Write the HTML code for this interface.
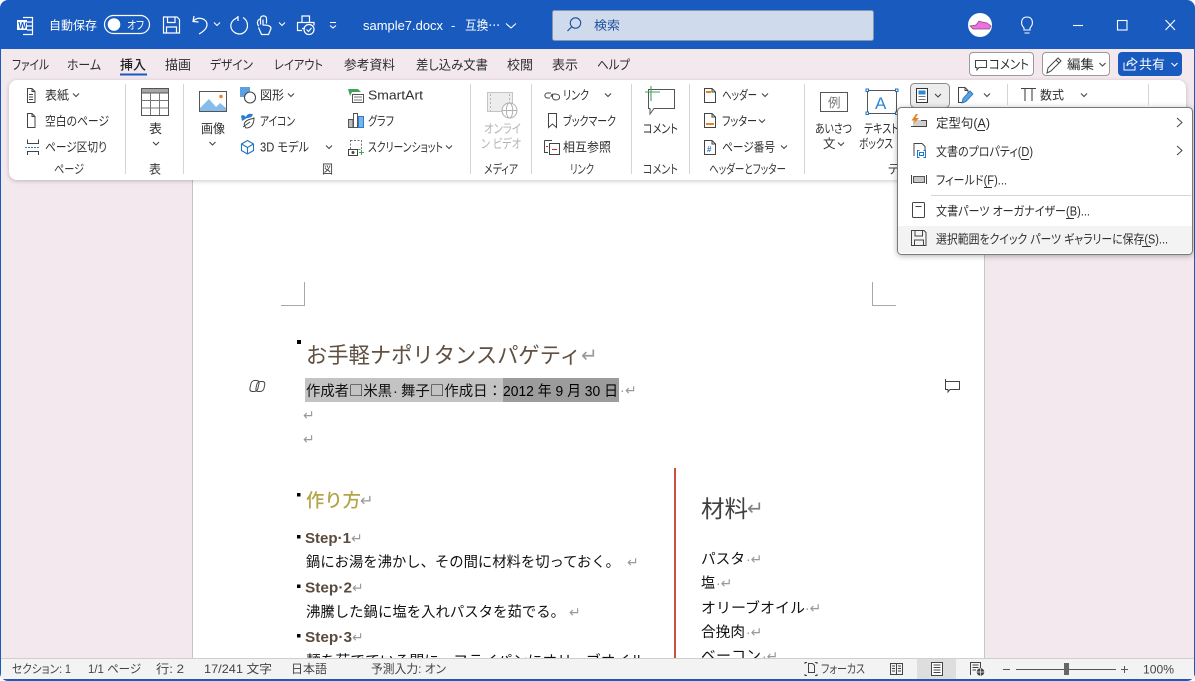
<!DOCTYPE html>
<html lang="ja"><head><meta charset="utf-8"><title>sample7.docx</title>
<style>
html,body{margin:0;padding:0;background:#fff;overflow:hidden;width:1195px;height:681px}
svg{display:block}
text{font-family:"Liberation Sans","Noto Sans CJK JP","DejaVu Sans",sans-serif;font-size:12px;fill:#333;font-feature-settings:"palt";white-space:pre}
.w{fill:#fff}
.tb{font-size:13px;fill:#2e2e2e}
.m{font-size:12.5px;fill:#2e2e2e}
.g{font-size:12.5px;fill:#3a3a3a}
.s{font-size:12px;fill:#444}
.d{font-size:14.5px;fill:#111;font-feature-settings:normal}
.j{font-family:"Noto Sans CJK JP",sans-serif}
.st{font-size:15px;font-weight:700;fill:#5a4b3e}
.r{fill:#999;font-size:14px;font-feature-settings:normal}
.dim{fill:#b3b3b3}
.ic{fill:none;stroke:#444;stroke-width:1}
.iw{fill:none;stroke:#fff;stroke-width:1.2}
.ch{fill:none;stroke:#444;stroke-width:1.1}
.cw{fill:none;stroke:#fff;stroke-width:1.1}
</style></head><body>
<svg width="1195" height="681" viewBox="0 0 1195 681" xmlns="http://www.w3.org/2000/svg">
<defs>
<path id="c" d="M-3 -1.5L0 1.5L3 -1.5" class="ch"/>
<path id="cw" d="M-3 -1.5L0 1.5L3 -1.5" class="cw"/>
</defs>

<!-- window -->
<rect x="0" y="0" width="1195" height="681" rx="8" fill="#185abd"/>
<rect x="1" y="49" width="1193" height="630" fill="#f3e8ee"/>

<!-- title bar -->
<g>
<g transform="translate(0,-2)">
<path d="M23 19.5H32.5V36.5H23" class="iw" stroke-width="1"/><path d="M27 24H32M27 28H32M27 32H32" class="iw"/>
<rect x="17" y="22" width="10" height="10" fill="#fff"/>
<text x="18.2" y="30.5" style="font-size:9px;font-weight:700;fill:#185abd">W</text>
</g>
<text class="w" x="49" y="29.5" textLength="48" lengthAdjust="spacingAndGlyphs">自動保存</text>
<rect x="104.500" y="15.500" width="45" height="18" rx="9" fill="none" stroke="#fff" stroke-width="1.200"/>
<circle cx="114" cy="24.500" r="6.300" fill="#fff"/>
<text class="w" x="127" y="29" style="font-size:11.500px" textLength="17" lengthAdjust="spacingAndGlyphs">オフ</text>
<g transform="translate(0,-1.500)">
<path d="M163.500 18.500H177L179.500 21V34.500H163.500ZM167.500 18.500V24H175V18.500M166.500 34.500V28.500H176.500V34.500" class="iw"/>
<path d="M194 17.500L193 23L198.500 23.500M193.500 22.500C198 17.500 207 20 207 26C207 30 203.500 33 199 35.500" class="iw"/>
<use href="#cw" x="217" y="25.500"/>
<path d="M238 18.500L233.500 21.500C231 24 230.500 27 231 29C232 33 236 35.500 239.500 35.500C244 35.500 247.500 31.500 247.500 27C247.500 23.500 245.500 20.500 243 19M238 17.500V22.500" class="iw"/>
<path d="M262 26V20C262 16.500 268 16.500 268 20V25M261.500 20.500C258 22 258.500 26 260.500 27.500M264.500 21V27M260 29L263 36H270L272.500 30C272.500 27.500 270 26.500 264.500 26.500" class="iw" transform="translate(-1.500,0)"/>
<use href="#cw" x="282" y="25.500"/>
<path d="M302 24V17.500H309.500V24M302 32H297.500V24H314V27M302 30H305" class="iw"/>
<circle cx="309" cy="31" r="5" class="iw"/><path d="M306.500 31L308.500 33L311.500 29.500" class="iw"/>
<path d="M330 24H336M330 27L333 29.500L336 27" class="cw"/>
</g>
<text class="w" x="363" y="30" style="font-size:13px" textLength="80" lengthAdjust="spacingAndGlyphs">sample7.docx</text>
<text class="w" x="451" y="30" style="font-size:13px">-</text>
<text class="w" x="465" y="30" style="font-size:13px" textLength="35" lengthAdjust="spacingAndGlyphs">互換⋯</text>
<path d="M506 23.500L511 28L516 23.500" class="cw"/>
<rect x="552.500" y="10.500" width="321" height="30" rx="2" fill="#cfdaec" stroke="#8496b4"/>
<circle cx="575.500" cy="23" r="5.200" fill="none" stroke="#1d4f9c" stroke-width="1.100"/><path d="M571.500 27L567.500 31" stroke="#1d4f9c" stroke-width="1.200"/>
<text x="594" y="29.500" style="fill:#1d4f9c" textLength="26" lengthAdjust="spacingAndGlyphs">検索</text>
<circle cx="980" cy="25" r="12" fill="#fff"/>
<path d="M970 26L976 25L979 21L982 22L987 23L991 26L989.500 29H973Z" fill="#ef6fe0" stroke="#7c4b78" stroke-width=".7"/>
<path d="M1024 30V28C1020 24 1021 17 1027 17C1033 17 1034 24 1030 28V30ZM1024.500 33H1029.500" fill="none" stroke="#fff" stroke-width="1.100"/>
<path d="M1073 25.500H1083" stroke="#fff" stroke-width="1.100"/>
<rect x="1117.500" y="20.500" width="9.500" height="9.500" fill="none" stroke="#fff" stroke-width="1.100"/>
<path d="M1165.500 20L1175 30M1175 20L1165.500 30" stroke="#fff" stroke-width="1.100"/>
</g>

<!-- tabs -->
<g>
<text class="tb" x="12" y="69.500" textLength="37" lengthAdjust="spacingAndGlyphs">ファイル</text>
<text class="tb" x="67" y="69.500" textLength="34" lengthAdjust="spacingAndGlyphs">ホーム</text>
<text class="tb" x="120" y="69.500" textLength="26" lengthAdjust="spacingAndGlyphs" style="font-weight:500;fill:#222">挿入</text>
<rect x="120" y="73.500" width="27" height="2" fill="#185abd"/>
<text class="tb" x="165" y="69.500" textLength="26" lengthAdjust="spacingAndGlyphs">描画</text>
<text class="tb" x="210" y="69.500" textLength="43" lengthAdjust="spacingAndGlyphs">デザイン</text>
<text class="tb" x="274" y="69.500" textLength="49" lengthAdjust="spacingAndGlyphs">レイアウト</text>
<text class="tb" x="344" y="69.500" textLength="51" lengthAdjust="spacingAndGlyphs">参考資料</text>
<text class="tb" x="416" y="69.500" textLength="72" lengthAdjust="spacingAndGlyphs">差し込み文書</text>
<text class="tb" x="507" y="69.500" textLength="26" lengthAdjust="spacingAndGlyphs">校閲</text>
<text class="tb" x="552" y="69.500" textLength="26" lengthAdjust="spacingAndGlyphs">表示</text>
<text class="tb" x="597" y="69.500" textLength="33" lengthAdjust="spacingAndGlyphs">ヘルプ</text>
<rect x="969.500" y="52.500" width="64" height="23" rx="3.500" fill="#fff" stroke="#9a9a9a"/>
<path d="M975.500 60.500H986.500V67.500H979L977 70V67.500H975.500Z" class="ic"/>
<text x="989" y="69" textLength="40" lengthAdjust="spacingAndGlyphs" style="fill:#2e2e2e;font-size:13px">コメント</text>
<rect x="1042.500" y="52.500" width="67" height="23" rx="3.500" fill="#fff" stroke="#9a9a9a"/>
<path d="M1047 73L1048 68L1058 58L1061 61L1051 71ZM1056 60L1059 63" class="ic"/>
<text x="1067" y="69" textLength="27" lengthAdjust="spacingAndGlyphs" style="fill:#2e2e2e;font-size:13px">編集</text>
<use href="#c" x="1102.500" y="64.500"/>
<rect x="1118" y="52" width="64" height="24" rx="4" fill="#185abd"/>
<path d="M1124 62.500V70H1135V66M1127 66C1127 62 1129 60.500 1132 60.500V58L1137 62L1132 65.500V63C1130 63 1128 64 1127 66Z" fill="none" stroke="#fff" stroke-width="1"/>
<text class="w" x="1139" y="69" textLength="26" lengthAdjust="spacingAndGlyphs" style="font-size:13px">共有</text>
<use href="#cw" x="1174.500" y="64.500"/>
</g>

<!-- document page -->
<rect x="193" y="180" width="791.500" height="480" fill="#fff"/>
<path d="M192.500 180V660M984.500 180V660" stroke="#c6c6c6"/>
<path d="M304.500 282V305.500H281M872.500 282V305.500H896" fill="none" stroke="#a8a8a8"/>

<rect x="297" y="340" width="4" height="4" fill="#000"/>
<text x="306" y="363" style="font-size:22px;fill:#5f5042;font-feature-settings:normal" textLength="275" lengthAdjust="spacingAndGlyphs">お手軽ナポリタンスパゲティ</text>
<text class="r" x="581" y="362" style="font-size:20px">↵</text>
<rect x="305" y="378" width="198" height="24" fill="#c3c3c3"/>
<rect x="503" y="378" width="116" height="24" fill="#9c9c9c"/>
<text class="d" x="306" y="396" textLength="86" lengthAdjust="spacingAndGlyphs">作成者<tspan class="j">□</tspan>米黒</text>
<text class="d" x="393" y="396">·</text>
<text class="d" x="401" y="396" textLength="101" lengthAdjust="spacingAndGlyphs">舞子<tspan class="j">□</tspan>作成日：</text>
<text class="d" x="503" y="396" textLength="115" lengthAdjust="spacingAndGlyphs" style="fill:#000">2012 年 9 月 30 日</text>
<text class="r" x="620" y="395">·</text><text class="r" x="625" y="395">↵</text>
<text class="r" x="303" y="420">↵</text>
<text class="r" x="303" y="444">↵</text>
<g fill="none" stroke="#444" stroke-width="1">
<rect x="249.500" y="380.500" width="8" height="11" rx="3" transform="skewX(-12) translate(83 0)"/>
<rect x="255.500" y="381.500" width="8" height="10" rx="3" transform="skewX(-12) translate(83 0)"/>
</g>
<path d="M945.500 381.500H959.500V389.500H950L948 392V389.500H945.500Z M945.500 379V384" class="ic"/>

<rect x="297" y="493" width="3.500" height="3.500" fill="#000"/>
<text x="306" y="507" style="font-size:18.500px;fill:#b3a547;font-weight:500;font-feature-settings:normal" textLength="55" lengthAdjust="spacingAndGlyphs">作り方</text>
<text class="r" x="360" y="506" style="font-size:16px">↵</text>
<rect x="297" y="535" width="3.500" height="3.500" fill="#000"/>
<text class="st" x="305" y="543" textLength="46" lengthAdjust="spacingAndGlyphs">Step·1</text>
<text class="r" x="351" y="543">↵</text>
<text class="d" x="306" y="567" textLength="314" lengthAdjust="spacingAndGlyphs">鍋にお湯を沸かし、その間に材料を切っておく。</text>
<text class="r" x="627" y="567">↵</text>
<rect x="297" y="584.500" width="3.500" height="3.500" fill="#000"/>
<text class="st" x="305" y="592.500" textLength="47" lengthAdjust="spacingAndGlyphs">Step·2</text>
<text class="r" x="352" y="592.500">↵</text>
<text class="d" x="306" y="617" textLength="259" lengthAdjust="spacingAndGlyphs">沸騰した鍋に塩を入れパスタを茹でる。</text>
<text class="r" x="569" y="617">↵</text>
<rect x="297" y="634" width="3.500" height="3.500" fill="#000"/>
<text class="st" x="305" y="642" textLength="47" lengthAdjust="spacingAndGlyphs">Step·3</text>
<text class="r" x="352" y="642">↵</text>
<text class="d" x="306" y="666" textLength="339" lengthAdjust="spacingAndGlyphs">麺を茹でている間に、フライパンにオリーブオイル</text>

<rect x="674" y="468" width="2" height="192" fill="#c9523f"/>
<text x="701" y="517" style="font-size:23.500px;fill:#404040" textLength="47" lengthAdjust="spacingAndGlyphs">材料</text>
<text class="r" x="747" y="515" style="font-size:20px;fill:#808080">↵</text>
<text class="d" x="701" y="564" textLength="44" lengthAdjust="spacingAndGlyphs">パスタ</text><text class="r" x="746" y="564">·↵</text>
<text class="d" x="701" y="588" textLength="14" lengthAdjust="spacingAndGlyphs">塩</text><text class="r" x="716" y="588">·↵</text>
<text class="d" x="701" y="613" textLength="104" lengthAdjust="spacingAndGlyphs">オリーブオイル</text><text class="r" x="805" y="613">·↵</text>
<text class="d" x="701" y="637" textLength="44" lengthAdjust="spacingAndGlyphs">合挽肉</text><text class="r" x="746" y="637">·↵</text>
<text class="d" x="701" y="661" textLength="60" lengthAdjust="spacingAndGlyphs">ベーコン</text><text class="r" x="762" y="661">·↵</text>

<!-- ribbon -->
<rect x="9" y="80" width="1177" height="100" rx="8" fill="#fff" style="filter:drop-shadow(0 1px 2px rgba(0,0,0,.22))"/>
<path d="M125.500 84V174M183.500 84V174M470.500 84V174M531.500 84V174M631.500 84V174M689.500 84V174M804.500 84V174M1007.500 84V105M1148.500 84V105" stroke="#d4d4d4"/>

<!-- page group -->
<g>
<path d="M27.500 88.500H32L35 91.500V102.500H27.500ZM32 88.500V91.500H35M29 94.500H33M29 97H33M29 99.500H33" class="ic"/>
<text class="m" x="45" y="99.500" textLength="24" lengthAdjust="spacingAndGlyphs">表紙</text><use href="#c" x="76" y="95"/>
<path d="M27.500 113.500H32L35 116.500V127.500H27.500ZM32 113.500V116.500H35" class="ic"/>
<text class="m" x="45" y="125.500" textLength="64" lengthAdjust="spacingAndGlyphs">空白のページ</text>
<path d="M27.500 139.500V143.500H38.500V139.500M27.500 155V151.500H38.500V155" class="ic"/>
<path d="M25 147.500H40" stroke="#2b7cd3" stroke-dasharray="2 1"/>
<text class="m" x="45" y="151.500" textLength="62" lengthAdjust="spacingAndGlyphs">ページ区切り</text>
<text class="g" x="54" y="173.500" textLength="30" lengthAdjust="spacingAndGlyphs">ページ</text>
</g>
<!-- table -->
<g>
<rect x="141.500" y="88.500" width="27" height="27" fill="#fff" stroke="#555"/>
<rect x="141.500" y="88.500" width="27" height="4.500" fill="#a6a6a6" stroke="#555"/>
<path d="M150.500 93V115M159.500 93V115M141.500 100.500H168.500M141.500 108H168.500" stroke="#777" fill="none"/>
<text class="m" x="149" y="133" textLength="13" lengthAdjust="spacingAndGlyphs">表</text>
<use href="#c" x="156" y="143.500"/>
<text class="g" x="149" y="173.500" textLength="12" lengthAdjust="spacingAndGlyphs">表</text>
</g>
<!-- illustrations -->
<g>
<rect x="199.500" y="91.500" width="27" height="20" fill="#fff" stroke="#555"/>
<path d="M200 108L209 99L216 107L220 103L226 108V111H200Z" fill="#86bce9"/>
<circle cx="221" cy="96.500" r="1.700" fill="#e8821e"/>
<text class="m" x="201" y="133" textLength="24" lengthAdjust="spacingAndGlyphs">画像</text>
<use href="#c" x="212.500" y="143.500"/>
<rect x="240" y="87" width="10" height="10" fill="#5ba0e0"/>
<circle cx="250" cy="97.500" r="5.500" fill="#fff" stroke="#444" stroke-width="1.100"/>
<text class="m" x="260" y="99.500" textLength="24" lengthAdjust="spacingAndGlyphs">図形</text><use href="#c" x="291" y="95"/>
<path d="M241 116C243 114 245 116 246 117C247 114 250 113 253 114.500C252 117 250 118 247 118L242 121Z" fill="#2b7cd3"/>
<path d="M246 128C243 125 244 122 248 120C250 119 252 119 254 118C254 123 252 128 246 128Z M243 127L250 122" class="ic"/>
<text class="m" x="260" y="125.500" textLength="35" lengthAdjust="spacingAndGlyphs">アイコン</text>
<path d="M247.500 140.500L253.500 144V150.500L247.500 154L241.500 150.500V144ZM241.500 144L247.500 147.500L253.500 144M247.500 147.500V154" fill="none" stroke="#1e75c8" stroke-width="1.100"/>
<text class="m" x="260" y="151.500" textLength="49" lengthAdjust="spacingAndGlyphs">3D モデル</text><use href="#c" x="329" y="147"/>
<text class="g" x="322" y="173.500" textLength="11" lengthAdjust="spacingAndGlyphs">図</text>
<path d="M348 89H358L361 92H352L350 96Z" fill="#3fa35b"/>
<rect x="352.500" y="94.500" width="11" height="8" fill="#fff" stroke="#555"/><path d="M354 97H362M354 100H362" stroke="#777"/>
<text class="m" x="368" y="99.500" style="font-size:13px" textLength="55" lengthAdjust="spacingAndGlyphs">SmartArt</text>
<rect x="348.500" y="119.500" width="4.500" height="8" fill="#bdbdbd" stroke="#555"/>
<rect x="353.500" y="113.500" width="4" height="14" fill="#fff" stroke="#555"/>
<rect x="358.500" y="116.500" width="5" height="11" fill="#7ab3e6" stroke="#2b7cd3"/>
<text class="m" x="368" y="125.500" textLength="26" lengthAdjust="spacingAndGlyphs">グラフ</text>
<rect x="350.500" y="140.500" width="11" height="9" fill="none" stroke="#777" stroke-dasharray="2 1.500"/>
<rect x="348.500" y="149.500" width="9" height="6" fill="#fff" stroke="#444"/><circle cx="353" cy="152.500" r="1.500" fill="#444"/>
<path d="M361.500 150V155M359 152.500H364" stroke="#3fa35b"/>
<text class="m" x="368" y="151.500" textLength="75" lengthAdjust="spacingAndGlyphs">スクリーンショット</text><use href="#c" x="449" y="147"/>
</g>
<!-- media -->
<g>
<rect x="487.500" y="92.500" width="25" height="19" fill="#ededed" stroke="#c4c4c4"/>
<path d="M490.500 94V111M509.500 94V111" stroke="#b5b5b5" stroke-dasharray="2 2"/>
<circle cx="509.500" cy="110.500" r="7.500" fill="#fff" stroke="#b0b0b0"/>
<ellipse cx="509.500" cy="110.500" rx="3.200" ry="7.500" fill="none" stroke="#b0b0b0"/><path d="M502 110.500H517" stroke="#b0b0b0"/>
<text class="m dim" x="484" y="133" textLength="37" lengthAdjust="spacingAndGlyphs">オンライ</text>
<text class="m dim" x="481" y="148" textLength="40" lengthAdjust="spacingAndGlyphs">ン ビデオ</text>
<text class="g" x="484" y="173.500" textLength="34" lengthAdjust="spacingAndGlyphs">メディア</text>
</g>
<!-- links -->
<g>
<path d="M551 93H547.500C544 93 544 98 547.500 98H550M551 97C551 94 553 94 555 94C561 94 561 100 556 100C552 100 552 96 553 95" class="ic"/>
<text class="m" x="563" y="99.500" textLength="26" lengthAdjust="spacingAndGlyphs">リンク</text><use href="#c" x="608" y="95"/>
<path d="M548.500 113.500H556.500V127.500L552.500 124L548.500 127.500Z" class="ic"/>
<text class="m" x="563" y="125.500" textLength="53" lengthAdjust="spacingAndGlyphs">ブックマーク</text>
<path d="M544.500 140.500H552M544.500 140.500V152.500H548" class="ic"/>
<rect x="549.500" y="143.500" width="10" height="11" fill="#fff" stroke="#444"/>
<path d="M552 149.500H557" stroke="#e02020"/><path d="M546 146.500H548" stroke="#e02020"/>
<text class="m" x="563" y="151.500" textLength="48" lengthAdjust="spacingAndGlyphs">相互参照</text>
<text class="g" x="570" y="173.500" textLength="24" lengthAdjust="spacingAndGlyphs">リンク</text>
</g>
<!-- comment -->
<g>
<path d="M648.500 89.500H674.500V108.500H654L650 114V108.500H648.500Z" fill="#fff" stroke="#555"/>
<path d="M651 86V101M645 92H660" stroke="#3fa35b" stroke-width="1.100"/>
<text class="m" x="643" y="133" textLength="35" lengthAdjust="spacingAndGlyphs">コメント</text>
<text class="g" x="643" y="173.500" textLength="35" lengthAdjust="spacingAndGlyphs">コメント</text>
</g>
<!-- header/footer -->
<g>
<path d="M704.500 88.500H712L715.500 92V102.500H704.500ZM712 88.500V92H715.500" class="ic"/>
<rect x="706" y="91" width="5" height="2" fill="#e8821e"/>
<text class="m" x="722" y="99.500" textLength="35" lengthAdjust="spacingAndGlyphs">ヘッダー</text><use href="#c" x="765" y="95"/>
<path d="M704.500 113.500H712L715.500 117V127.500H704.500ZM712 113.500V117H715.500" class="ic"/>
<rect x="706" y="123" width="8" height="2" fill="#e8821e"/>
<text class="m" x="722" y="125.500" textLength="35" lengthAdjust="spacingAndGlyphs">フッター</text><use href="#c" x="762" y="121"/>
<path d="M704.500 140.500H712L715.500 144V154.500H704.500ZM712 140.500V144H715.500" class="ic"/>
<text x="707" y="152" style="font-size:8px;font-weight:700;fill:#1e75c8">#</text>
<text class="m" x="722" y="151.500" textLength="53" lengthAdjust="spacingAndGlyphs">ページ番号</text><use href="#c" x="784" y="147"/>
<text class="g" x="709" y="173.500" textLength="77" lengthAdjust="spacingAndGlyphs">ヘッダーとフッター</text>
</g>
<!-- text group -->
<g>
<rect x="820.500" y="92.500" width="27" height="19" fill="#fff" stroke="#555"/>
<text x="828" y="107" style="font-size:12.500px;fill:#777">例</text>
<text class="m" x="815" y="133" textLength="37" lengthAdjust="spacingAndGlyphs">あいさつ</text>
<text class="m" x="823" y="148" textLength="12.500" lengthAdjust="spacingAndGlyphs">文</text><use href="#c" x="841" y="144"/>
<rect x="867.500" y="90.500" width="29" height="23" fill="#fff" stroke="#555"/>
<g fill="#fff" stroke="#1e75c8"><rect x="866" y="89" width="2.500" height="2.500"/><rect x="895.500" y="89" width="2.500" height="2.500"/><rect x="866" y="112" width="2.500" height="2.500"/><rect x="895.500" y="112" width="2.500" height="2.500"/></g>
<text x="875" y="109" style="font-size:17px;fill:#2b88d8">A</text>
<text class="m" x="864" y="133" textLength="35" lengthAdjust="spacingAndGlyphs">テキスト</text>
<text class="m" x="859" y="148" textLength="34" lengthAdjust="spacingAndGlyphs">ボックス</text>
<text class="g" x="888" y="173.500">テ</text>
<rect x="910.500" y="83.500" width="39" height="24" rx="4" fill="#ededed" stroke="#8a8a8a"/>
<rect x="916.500" y="88.500" width="11" height="14" fill="#fff" stroke="#333"/>
<rect x="918.500" y="90.500" width="7" height="4" fill="#2b88d8"/><path d="M918.500 96.500H925.500M918.500 99.500H925.500" stroke="#777"/>
<use href="#c" x="938" y="95.500"/>
<path d="M964 102.500H958.500V87.500H965L968 90.500V93M965 87.500V90.500H968" class="ic"/>
<path d="M962 103L963 98.500L970 91L973 94L966 101.500Z" fill="#5ba0e0" stroke="#1e75c8" stroke-width=".8"/>
<use href="#c" x="987" y="95"/>
<path d="M1021 88.500H1036M1025 88.500V101M1032 88.500V101" fill="none" stroke="#444" stroke-width="1.100"/>
<text class="m" x="1040" y="99.500" textLength="24" lengthAdjust="spacingAndGlyphs">数式</text><use href="#c" x="1084" y="95"/>
</g>

<!-- dropdown menu -->
<g>
<rect x="897.500" y="107.500" width="295" height="147" rx="4" fill="#fff" stroke="#7a7a7a" style="filter:drop-shadow(0 1px 3px rgba(0,0,0,.3))"/>
<path d="M898 226H1192V249A4 4 0 0 1 1188 253H902A4 4 0 0 1 898 249Z" fill="#f3f3f3"/>
<rect x="913" y="120" width="14" height="6" fill="#cfcfcf"/>
<path d="M911 126.500H926.500V120.500H921" class="ic"/>
<path d="M916 114L911.500 120.500H915L913.500 124L919 118H915.500L918 114Z" fill="#e8821e"/>
<text class="m" x="936" y="127.500" textLength="54" lengthAdjust="spacingAndGlyphs">定型句(A)</text>
<path d="M977 130.500H985" stroke="#333"/>
<path d="M1177 118L1182 122.500L1177 127" class="ic"/>
<path d="M914 156V143.500H922L925 146.500V150" class="ic"/>
<path d="M919.500 150.500H917.500V157.500H919.500M923.500 150.500H925.500V157.500H923.500" fill="none" stroke="#1e75c8"/><rect x="919.500" y="152.500" width="4" height="3" fill="none" stroke="#1e75c8"/>
<text class="m" x="936" y="156" textLength="97" lengthAdjust="spacingAndGlyphs">文書のプロパティ(D)</text>
<path d="M1021 159.500H1029" stroke="#333"/>
<path d="M1177 146L1182 150.500L1177 155" class="ic"/>
<path d="M912 175.500H911.500V183.500H912M926 175.500H926.500V183.500H926" class="ic"/>
<rect x="913.500" y="176.500" width="11" height="6" fill="#c8c8c8" stroke="#555"/>
<text class="m" x="936" y="184.500" textLength="71" lengthAdjust="spacingAndGlyphs">フィールド(F)...</text>
<path d="M984 187.500H992" stroke="#333"/>
<path d="M931 195.500H1191" stroke="#d4d4d4"/>
<rect x="912.500" y="202.500" width="12" height="15" rx="1" fill="#fff" stroke="#444"/><path d="M915.500 206.500H921.500" stroke="#444"/>
<text class="m" x="936" y="215.500" textLength="154" lengthAdjust="spacingAndGlyphs">文書パーツ オーガナイザー(B)...</text>
<path d="M1066 218.500H1074" stroke="#333"/>
<path d="M911.500 230.500H924L926 232.500V245.500H911.500ZM915 230.500V236H922.500V230.500M914.500 245.500V240H923.500V245.500" class="ic"/>
<text class="m" x="936" y="243.500" textLength="232" lengthAdjust="spacingAndGlyphs">選択範囲をクイック パーツ ギャラリーに保存(S)...</text>
<path d="M1142 246.500H1151" stroke="#333"/>
</g>

<!-- status bar -->
<g>
<rect x="1" y="658" width="1193" height="21" fill="#f3f3f3"/>
<path d="M1 658.500H1194" stroke="#cfcfcf"/>
<text class="s" x="12" y="673" textLength="59" lengthAdjust="spacingAndGlyphs">セクション: 1</text>
<text class="s" x="88" y="673" textLength="53" lengthAdjust="spacingAndGlyphs">1/1 ページ</text>
<text class="s" x="156" y="673" textLength="28" lengthAdjust="spacingAndGlyphs">行: 2</text>
<text class="s" x="204" y="673" textLength="68" lengthAdjust="spacingAndGlyphs">17/241 文字</text>
<text class="s" x="291" y="673" textLength="36" lengthAdjust="spacingAndGlyphs">日本語</text>
<text class="s" x="371" y="673" textLength="75" lengthAdjust="spacingAndGlyphs">予測入力: オン</text>
<path d="M805 664V662.500H807M817 664V662.500H815M805 674V675.500H807M817 674V675.500H815" class="ic"/>
<path d="M808.500 663.500H812.500L814.500 665.500V672.500H808.500Z" class="ic"/>
<text class="s" x="821" y="673" textLength="44" lengthAdjust="spacingAndGlyphs">フォーカス</text>
<path d="M890.500 663.500H896.500V674.500H890.500ZM896.500 663.500H902.500V674.500H896.500ZM892 666H895M892 668.500H895M892 671H895M898 666H901M898 668.500H901M898 671H901" class="ic"/>
<rect x="917" y="659" width="39" height="20" fill="#dedede"/>
<rect x="931.500" y="662.500" width="11" height="13" fill="#fff" stroke="#444"/><path d="M933.500 665H940.500M933.500 667.500H940.500M933.500 670H940.500M933.500 672.500H940.500" stroke="#444"/>
<path d="M970.500 675V662.500H980.500V668M972.500 665H978.500M972.500 667.500H978.500M972.500 670H976" class="ic"/>
<circle cx="980.500" cy="672" r="3.800" fill="#444"/><path d="M976.700 672H984.300M980.500 668.200V675.800" stroke="#f3f3f3" stroke-width=".7"/>
<path d="M1003 669.500H1010M1016 669.500H1116M1121 669.500H1128M1124.500 666V673" stroke="#555" fill="none"/>
<rect x="1064" y="663" width="5" height="12" fill="#666"/>
<text class="s" x="1143" y="673.500" textLength="31" lengthAdjust="spacingAndGlyphs" style="font-size:12px">100%</text>
</g>
</svg>
</body></html>
